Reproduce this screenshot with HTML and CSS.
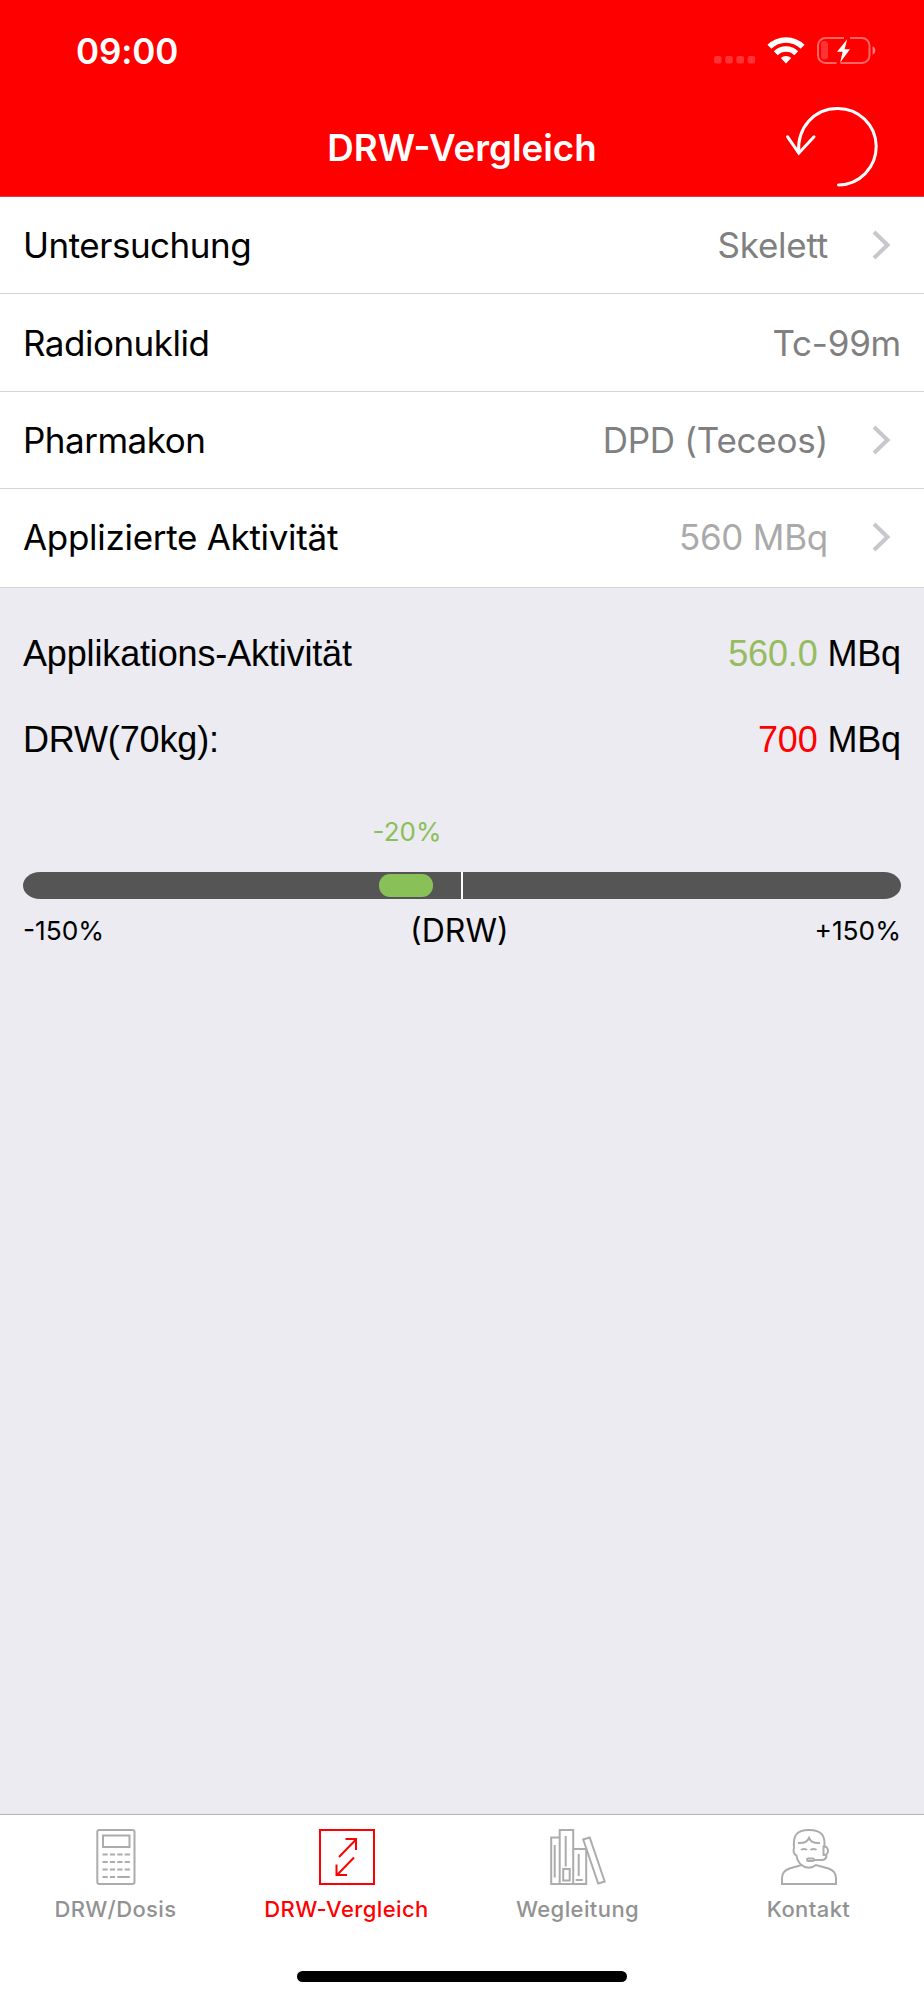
FILE: index.html
```html
<!DOCTYPE html>
<html lang="de">
<head>
    <meta charset="UTF-8">
    <meta name="viewport" content="width=device-width, initial-scale=1.0">
    <title>DRW-Vergleich</title>
    <link rel="stylesheet" href="styles.css">
</head>
<body>

<div class="app">
    <!-- Kopfbereich -->
    <header class="header">
        <div class="status-bar">
            <span class="time">09:00</span>
            <div class="status-icons">
                <svg class="icon-signal" width="43" height="33" viewBox="713 34 43 33">
                    <rect x="714" y="56" width="7.6" height="7.4" rx="2"/>
                    <rect x="725.2" y="56" width="7.6" height="7.4" rx="2"/>
                    <rect x="736.4" y="56" width="7.6" height="7.4" rx="2"/>
                    <rect x="747.6" y="56" width="7.6" height="7.4" rx="2"/>
                </svg>
                <svg class="icon-wifi" width="40" height="33" viewBox="766 34 40 33">
                    <path class="arc" d="M769.4 46.8a23.6 23.6 0 0 1 33.2 0"/>
                    <path class="arc" d="M775.8 53.2a14.6 14.6 0 0 1 20.4 0"/>
                    <path d="M786 63.4l-5.2-5.3a7.4 7.4 0 0 1 10.4 0z"/>
                </svg>
                <svg class="icon-battery" width="60" height="33" viewBox="816 34 60 33">
                    <path class="case" d="M844 38h-18.5a7.5 7.5 0 0 0-7.5 7.5v10a7.5 7.5 0 0 0 7.5 7.5h11M850 38h12a7.5 7.5 0 0 1 7.5 7.5v10a7.5 7.5 0 0 1-7.5 7.5h-21.5"/>
                    <path class="cap" d="M872.6 46.2c3.6 1.4 3.6 7.2 0 8.6z"/>
                    <rect class="level" x="821" y="41" width="7" height="18.6" rx="3.3"/>
                    <path class="bolt" d="M847.2 39.2L837 51.8h5.6L840.2 62.6 850 49.3h-5.4z"/>
                </svg>
            </div>
        </div>
        <div class="nav-bar">
            <h1 class="title">DRW-Vergleich</h1>
            <button class="reset" aria-label="Zurücksetzen">
                <svg width="96" height="86" viewBox="784 104 96 86">
                    <path d="M798.7 152.5C797 128 814 108.4 837.3 108.4a38.3 38.3 0 0 1 1.2 76.6"/>
                    <path d="M787.6 136.8l11.2 16.4 15.2-16.4"/>
                </svg>
            </button>
        </div>
    </header>

    <!-- Auswahl -->
    <ul class="options">
        <li class="option">
            <span class="label">Untersuchung</span>
            <span class="value">Skelett</span>
            <svg class="chevron" width="20" height="30" viewBox="0 0 20 30"><path d="M2 2l13.5 13L2 28"/></svg>
        </li>
        <li class="option">
            <span class="label">Radionuklid</span>
            <span class="value">Tc-99m</span>
        </li>
        <li class="option">
            <span class="label">Pharmakon</span>
            <span class="value">DPD (Teceos)</span>
            <svg class="chevron" width="20" height="30" viewBox="0 0 20 30"><path d="M2 2l13.5 13L2 28"/></svg>
        </li>
        <li class="option">
            <span class="label">Applizierte Aktivität</span>
            <span class="value placeholder">560 MBq</span>
            <svg class="chevron" width="20" height="30" viewBox="0 0 20 30"><path d="M2 2l13.5 13L2 28"/></svg>
        </li>
    </ul>

    <!-- Ergebnis -->
    <main class="result">
        <div class="result-row">
            <span>Applikations-Aktivität</span>
            <span><span class="good">560.0</span> MBq</span>
        </div>
        <div class="result-row">
            <span>DRW(70kg):</span>
            <span><span class="limit">700</span> MBq</span>
        </div>

        <div class="scale">
            <div class="deviation">-20%</div>
            <div class="bar">
                <div class="marker"></div>
                <div class="center-line"></div>
            </div>
            <div class="scale-labels">
                <span>-150%</span>
                <span class="scale-center">(DRW)</span>
                <span>+150%</span>
            </div>
        </div>
    </main>

    <!-- Tableiste -->
    <nav class="tab-bar">
        <a class="tab">
            <svg width="56" height="56" viewBox="0 0 56 56">
                <rect x="9.3" y="1" width="37.2" height="54" rx="2"/>
                <rect x="15" y="6.5" width="26.5" height="11.5"/>
                <path d="M14.5 25.5h27.5M14.5 33h27.5M14.5 40.5h27.5" stroke-dasharray="5.2 2.2"/>
                <path d="M14.5 48h5.2M21.9 48h5.2M29.3 48h12.5"/>
            </svg>
            <span>DRW/Dosis</span>
        </a>
        <a class="tab active">
            <svg width="56" height="56" viewBox="0 0 56 56">
                <rect x="1" y="1" width="54" height="54"/>
                <path d="M20 28L37 10.5M26.5 10h10.5v11M35 28.5L18 46M17.5 35.5V46h10.5"/>
            </svg>
            <span>DRW-Vergleich</span>
        </a>
        <a class="tab">
            <svg width="56" height="56" viewBox="0.8 0 56 56">
                <path d="M2 55V8.5h8.5M10.5 55V1h13.5v54zM1 55h36V20H24M5.5 16v32.5M16.500 7v30.5M29.500 25v22M26.5 51h7"/>
                <rect x="14" y="40" width="6.5" height="11.5"/>
                <path d="M34 10.5l6.500-2L55.500 52.500l-6.500 2z"/>
            </svg>
            <span>Wegleitung</span>
        </a>
        <a class="tab">
            <svg width="56" height="56" viewBox="0 0 56 56">
                <path d="M1 55V49c0-5 3-8 7.5-9.5L20.5 36c4 3.5 10.500 3.5 14.5 0l12.5 3.5C52 41 55 44 55 49v6z"/>
                <path d="M20.5 36c-3-2.5-4.5-5.5-5-9.5-3-1-3.5-5-2.5-7.5C12 7 15 1 28 1s16.5 6 15.3 17"/>
                <path d="M17 14c5 .5 9-.5 11-5 2 4.5 6 5.5 11 5M20 21c1-1.5 5-1.5 6 0M29.5 21c1-1.5 5-1.5 6 0M42.5 17.5V26c6 1 6-9.500 0-8.5zM45.5 26c0 4-2 5-5 5H33"/>
                <rect x="26" y="29.5" width="7" height="2.6" rx="1.3"/>
            </svg>
            <span>Kontakt</span>
        </a>
        <div class="home-indicator"></div>
    </nav>
</div>

</body>
</html>
```
FILE: styles.css
```css
* { box-sizing: border-box; }

body {
    margin: 0;
    font-family: Inter, sans-serif;
    color: #000;
}

.app {
    display: flex;
    flex-direction: column;
    width: 924px;
    height: 2000px;
    background-color: #ebebf1;
}

/* Kopfbereich */
.header {
    height: 197px;
    background-color: #ff0000;
    border-bottom: 1px solid #d94148;
    color: #fff;
}

.status-bar {
    display: flex;
    align-items: center;
    justify-content: space-between;
    height: 98px;
    padding: 3px 48px 0 76px;
}

.time { font-size: 35px; font-weight: 600; letter-spacing: -0.1px; }

.status-icons { display: flex; gap: 10px; fill: #fff; }
.icon-signal { opacity: 0.2; }
.arc { fill: none; stroke: #fff; stroke-width: 5.5; }
.case { fill: none; stroke: #fff; stroke-width: 2; opacity: 0.4; }
.cap { opacity: 0.5; }
.level { opacity: 0.2; }

.nav-bar {
    display: grid;
    grid-template-columns: 1fr auto 1fr;
    align-items: center;
    height: 98px;
    padding: 0 44px;
}

.title {
    grid-column: 2;
    margin: 0;
    font-size: 36.7px;
    font-weight: 600;
}

.reset {
    justify-self: end;
    display: flex;
    padding: 0;
    border: none;
    background: none;
}

.reset svg { fill: none; stroke: #fff; stroke-width: 3; stroke-linecap: round; }

/* Auswahl */
.options {
    display: grid;
    grid-template-rows: 97px 98px 97px 99px;
    margin: 0;
    padding: 0;
    list-style: none;
    background-color: #fff;
    font-size: 35px;
}

.option {
    display: flex;
    align-items: center;
    padding: 0 23px;
    border-bottom: 1px solid #d5d5d7;
}

.option:last-child { padding-bottom: 2px; }

.label { letter-spacing: -0.5px; }
.option:last-child .label { letter-spacing: -0.3px; }
.value { margin-left: auto; color: #808080; letter-spacing: -0.25px; }
.placeholder { color: #aaa; }

.chevron {
    margin-left: 44px;
    margin-right: 9px;
    fill: none;
    stroke: #c7c7cc;
    stroke-width: 4;
}

/* Ergebnis */
.result {
    flex: 1;
    padding: 23px 23px 0;
    font-family: "Liberation Sans", Arial, sans-serif;
}

.result-row {
    display: flex;
    align-items: center;
    justify-content: space-between;
    height: 86px;
    font-size: 36px;
    letter-spacing: -0.15px;
}

.good { color: #96bc5f; }
.limit { color: #ff0000; }

.scale { font-family: Inter, sans-serif; font-size: 26.3px; }

.deviation {
    width: 768px;
    padding-top: 32px;
    line-height: 34px;
    text-align: center;
    font-size: 26px;
    color: #89c058;
}

.bar {
    position: relative;
    height: 27px;
    margin-top: 23px;
    border-radius: 17px / 13.5px;
    background-color: #555;
}

.marker {
    position: absolute;
    left: 356px;
    top: 2px;
    width: 54px;
    height: 23px;
    border-radius: 11px;
    background-color: #89c058;
}

.center-line {
    position: absolute;
    left: 438px;
    width: 2px;
    height: 27px;
    background-color: #fff;
}

.scale-labels {
    display: flex;
    align-items: center;
    justify-content: space-between;
    margin-top: 12px;
}

.scale-center { font-size: 32px; }

/* Tableiste */
.tab-bar {
    display: grid;
    grid-template-columns: repeat(4, 1fr);
    height: 186px;
    border-top: 1px solid #b5b5b9;
    background-color: #fff;
}

.tab {
    display: flex;
    flex-direction: column;
    align-items: center;
    padding-top: 14px;
    color: #929292;
    font-size: 22px;
    font-weight: 500;
    letter-spacing: 0.4px;
}

.tab svg { fill: none; stroke: #acacac; stroke-width: 2; }
.tab span { margin-top: 11px; line-height: 26px; }

.tab.active { color: #ff0000; }
.tab.active svg { stroke: #ff0000; }

.home-indicator {
    grid-column: 1 / -1;
    justify-self: center;
    align-self: end;
    width: 330px;
    height: 11px;
    margin-bottom: 18px;
    border-radius: 6px;
    background-color: #000;
}
```
